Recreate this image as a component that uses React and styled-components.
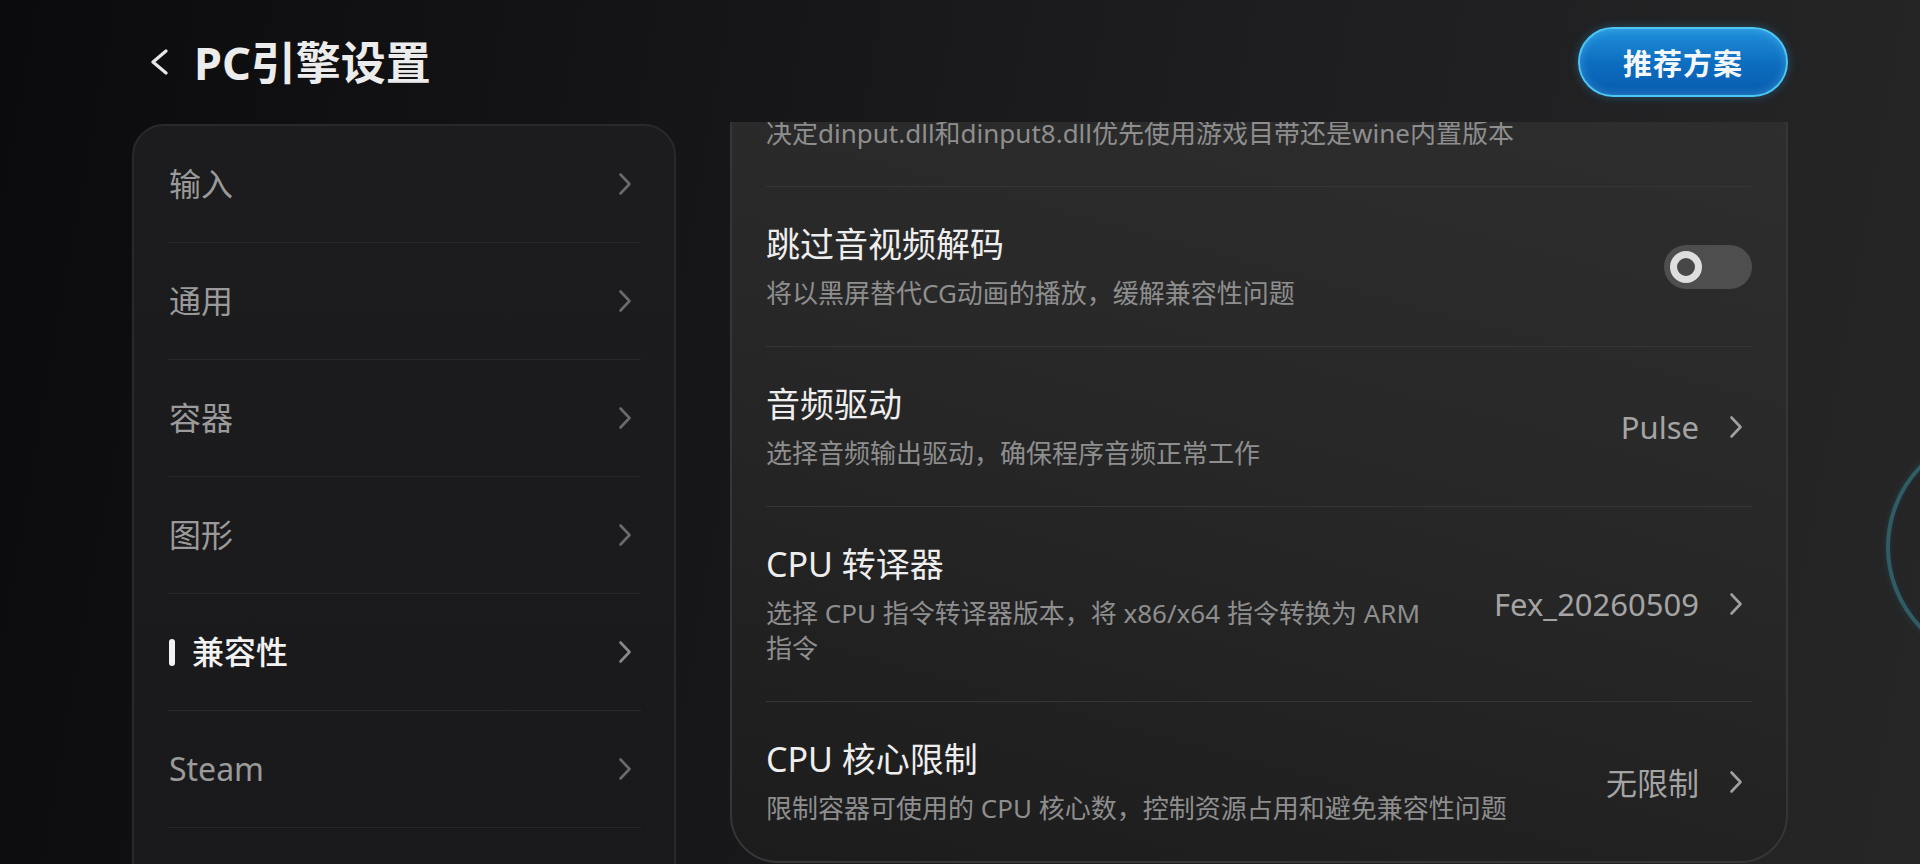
import styled, { createGlobalStyle } from 'styled-components';

const GlobalStyle = createGlobalStyle`
  html, body {
    margin: 0;
    padding: 0;
    background: #0c0c0e;
  }
  *, *::before, *::after {
    box-sizing: border-box;
  }
`;

const FONT = `"Noto Sans", "Noto Sans CJK SC", sans-serif`;

const Page = styled.div`
  position: relative;
  height: 864px;
  overflow: hidden;
  padding: 0 132px;
  font-family: ${FONT};
  background: linear-gradient(100deg, #0b0b0d 0%, #141416 30%, #1e1e20 62%, #262627 100%);
`;

const Header = styled.header`
  height: 124px;
  display: flex;
  align-items: center;
  justify-content: space-between;
`;

const BackTitle = styled.div`
  display: flex;
  align-items: center;
  gap: 24px;
  padding-left: 16px;
  color: #e8e8e8;
`;

const PageTitle = styled.h1`
  margin: 0;
  font-size: 45px;
  font-weight: 700;
  line-height: 1;
  color: #ececec;
`;

const PresetButton = styled.button`
  width: 210px;
  height: 70px;
  border-radius: 35px;
  border: 2px solid #4cc6f3;
  background: linear-gradient(180deg, #1f8fda 0%, #0c6cbf 55%, #0a5cae 100%);
  box-shadow: 0 0 10px rgba(45, 170, 240, 0.35), inset 0 0 10px rgba(120, 215, 255, 0.35);
  color: #f4f8fc;
  font-family: ${FONT};
  font-size: 29px;
  font-weight: 700;
  letter-spacing: 1px;
  cursor: pointer;
`;

const Body = styled.div`
  display: grid;
  grid-template-columns: 544px 1fr;
  column-gap: 54px;
  height: 740px;
`;

const NavPanel = styled.nav`
  align-self: start;
  border-radius: 32px;
  border: 2px solid #29292b;
  background: linear-gradient(180deg, #1c1c1e 0%, #19191b 100%);
  padding: 0 33px 120px 34px;
`;

const NavRow = styled.div`
  height: 117px;
  display: flex;
  align-items: center;
  justify-content: space-between;
  border-bottom: 1px solid #28282a;
  padding: 0 9px 0 1px;
  color: ${({ $active }) => ($active ? '#f2f2f2' : '#9a9a9a')};
  cursor: pointer;
`;

const NavLabel = styled.span`
  display: flex;
  align-items: center;
  font-size: 32px;
  font-weight: ${({ $active }) => ($active ? 500 : 400)};
  line-height: 1;

  ${({ $active }) =>
    $active &&
    `
    &::before {
      content: '';
      width: 6px;
      height: 27px;
      border-radius: 3px;
      background: #f2f2f2;
      margin-right: 17px;
    }
  `}
`;

const ScrollArea = styled.div`
  height: 742px;
  margin-top: -2px;
  overflow: hidden;
`;

// the list is scrolled part-way, so the first row sits under the clip edge
const SettingsCard = styled.section`
  margin-top: -43px;
  border-radius: 48px;
  border: 2px solid #363637;
  background: linear-gradient(195deg, #2e2e2e 0%, #282828 45%, #1c1c1d 100%);
  padding: 0 34px;
`;

const SettingRow = styled.div`
  display: flex;
  align-items: center;
  padding: 35px 0;
  border-bottom: 1px solid #353536;

  &:last-child {
    border-bottom: none;
  }
`;

const TextCol = styled.div`
  flex: 1;
  min-width: 0;
`;

const RowTitle = styled.div`
  font-size: 34px;
  line-height: 44px;
  color: #eeeeee;
`;

const RowDesc = styled.div`
  font-size: 26px;
  line-height: 35px;
  color: #8e8e8e;

  ${RowTitle} + & {
    margin-top: 10px;
  }
`;

const ValueBox = styled.div`
  flex-shrink: 0;
  margin-left: 48px;
  display: flex;
  align-items: center;
  gap: 30px;
  padding-right: 9px;
  font-size: 31px;
  color: #a4a4a4;
`;

const Toggle = styled.div`
  flex-shrink: 0;
  margin-left: 48px;
  width: 88px;
  height: 44px;
  border-radius: 22px;
  background: ${({ $on }) => ($on ? '#1d86d4' : '#4e4e4e')};
  display: flex;
  align-items: center;
  justify-content: ${({ $on }) => ($on ? 'flex-end' : 'flex-start')};
  padding: 0 6px;

  &::after {
    content: '';
    width: 32px;
    height: 32px;
    border-radius: 50%;
    border: 7px solid #dedede;
    background: #474747;
  }
`;

const FloatBall = styled.div`
  position: absolute;
  left: 1886px;
  top: 430px;
  width: 234px;
  height: 234px;
  border-radius: 50%;
  border: 4px solid rgba(52, 112, 118, 0.75);
  box-shadow: 0 0 6px rgba(40, 120, 130, 0.3), inset 0 0 4px rgba(40, 80, 140, 0.3);
`;

const Chevron = ({ color, size = 24 }) => (
  <svg width={(size * 14) / 24} height={size} viewBox="0 0 14 24" fill="none">
    <path d="M2.5 2.5 L11.5 12 L2.5 21.5" stroke={color} strokeWidth="2.6" strokeLinecap="round" strokeLinejoin="round" />
  </svg>
);

const BackArrow = () => (
  <svg width="22" height="26" viewBox="0 0 22 26" fill="none">
    <path d="M18 2 L5 13 L18 24" stroke="#e6e6e6" strokeWidth="3.2" strokeLinecap="round" strokeLinejoin="round" />
  </svg>
);

const navItems = ['输入', '通用', '容器', '图形', '兼容性', 'Steam'];

const settings = [
  {
    id: 'dinput',
    desc: '决定dinput.dll和dinput8.dll优先使用游戏目带还是wine内置版本',
  },
  {
    id: 'skip-media',
    title: '跳过音视频解码',
    desc: '将以黑屏替代CG动画的播放，缓解兼容性问题',
    toggle: false,
  },
  {
    id: 'audio',
    title: '音频驱动',
    desc: '选择音频输出驱动，确保程序音频正常工作',
    value: 'Pulse',
  },
  {
    id: 'translator',
    title: 'CPU 转译器',
    desc: '选择 CPU 指令转译器版本，将 x86/x64 指令转换为 ARM 指令',
    value: 'Fex_20260509',
  },
  {
    id: 'cores',
    title: 'CPU 核心限制',
    desc: '限制容器可使用的 CPU 核心数，控制资源占用和避免兼容性问题',
    value: '无限制',
  },
];

export default function App() {
  const active = '兼容性';

  return (
    <>
      <GlobalStyle />
      <Page>
        <Header>
          <BackTitle>
            <BackArrow />
            <PageTitle>PC引擎设置</PageTitle>
          </BackTitle>
          <PresetButton>推荐方案</PresetButton>
        </Header>

        <Body>
          <NavPanel>
            {navItems.map((item) => (
              <NavRow key={item} $active={item === active}>
                <NavLabel $active={item === active}>{item}</NavLabel>
                <Chevron color={item === active ? '#8a8a8a' : '#6a6a6a'} />
              </NavRow>
            ))}
          </NavPanel>

          <ScrollArea>
            <SettingsCard>
              {settings.map((s) => (
                <SettingRow key={s.id}>
                  <TextCol>
                    {s.title && <RowTitle>{s.title}</RowTitle>}
                    <RowDesc>{s.desc}</RowDesc>
                  </TextCol>
                  {s.toggle !== undefined && <Toggle $on={s.toggle} />}
                  {s.value && (
                    <ValueBox>
                      <span>{s.value}</span>
                      <Chevron color="#a0a0a0" />
                    </ValueBox>
                  )}
                </SettingRow>
              ))}
            </SettingsCard>
          </ScrollArea>
        </Body>

        <FloatBall />
      </Page>
    </>
  );
}
